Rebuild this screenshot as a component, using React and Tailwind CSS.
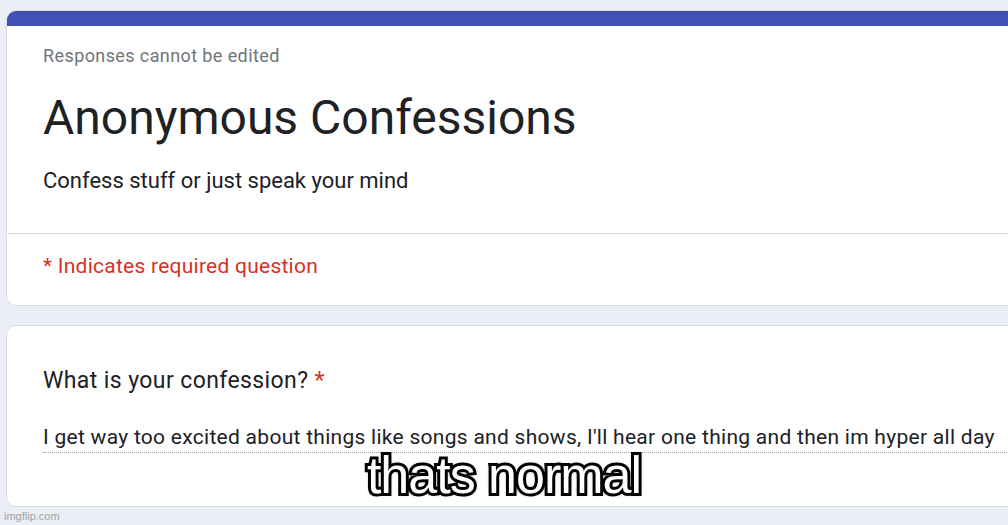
import React from 'react'

export default function App() {
    return (
        <div className="relative h-[525px] w-[1008px] overflow-hidden bg-[#ebedf7] font-[Roboto,'Noto_Sans',Arial,sans-serif]">
            <div className="flex flex-col gap-[19px] pl-[6px] pt-[10px]">
                {/* header card */}
                <div className="w-[1030px] overflow-hidden rounded-[10px] border border-[#dadce0] bg-white">
                    <div className="h-[15px] bg-[#3f51b5]" />
                    <div className="px-[36px]">
                        <div className="mt-[18px] text-[18px] leading-[24px] tracking-[0.4px] text-[#70757a]">
                            Responses cannot be edited
                        </div>
                        <h1 className="mt-[20px] text-[48px] leading-[60px] text-[#202124]">
                            Anonymous Confessions
                        </h1>
                        <div className="mt-[19px] text-[22px] leading-[28px] text-[#202124]">
                            Confess stuff or just speak your mind
                        </div>
                    </div>
                    <div className="mt-[38px] border-t border-[#dadce0]" />
                    <div className="px-[36px] pb-[26px] pt-[19px] text-[21px] leading-[26px] tracking-[0.25px] text-[#d93025]">
                        * Indicates required question
                    </div>
                </div>

                {/* question card */}
                <div className="w-[1030px] rounded-[10px] border border-[#dadce0] bg-white pb-[53px] pl-[36px] pt-[40px]">
                    <div className="text-[23px] leading-[30px] tracking-[0.4px] text-[#202124]">
                        What is your confession? <span className="text-[#d93025]">*</span>
                    </div>
                    <div className="mt-[27px] border-b border-dotted border-[#9aa0a6] pb-[1px] text-[21px] leading-[28px] tracking-[0.28px] whitespace-nowrap text-[#202124]">
                        I get way too excited about things like songs and shows, I'll hear one thing and then im hyper all day
                    </div>
                </div>
            </div>

            {/* meme caption */}
            <div className="absolute left-0 right-0 top-[453px] text-center font-['Liberation_Sans',Arial,sans-serif] text-[52px] leading-[44px] tracking-[-1px] text-white [-webkit-text-stroke:6px_#000] [paint-order:stroke_fill] [text-shadow:0_0_4px_#000]">
                thats normal
            </div>

            <div className="absolute bottom-[3px] left-[4px] font-['Liberation_Sans',Arial,sans-serif] text-[11px] leading-[12px] text-[#a4a4a4]">
                imgflip.com
            </div>
        </div>
    )
}
